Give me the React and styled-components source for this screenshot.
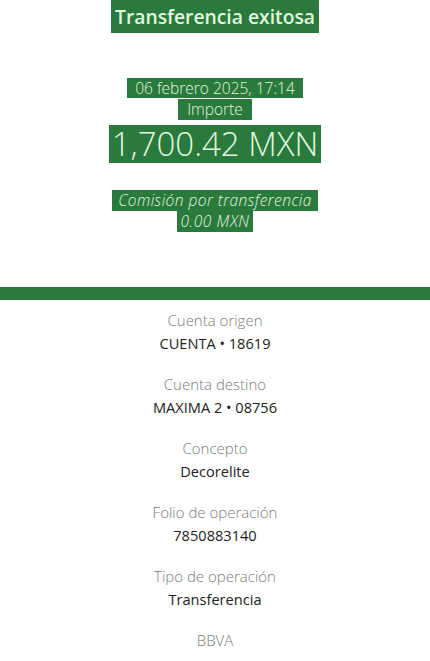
import React from "react";
import styled, { createGlobalStyle } from "styled-components";

const green = "#2a7a3d";

const GlobalStyle = createGlobalStyle`
  body {
    margin: 0;
    background: #ffffff;
    font-family: "Open Sans", "Noto Sans", sans-serif;
  }
`;

const Page = styled.div`
  width: 430px;
  display: flex;
  flex-direction: column;
  align-items: center;
`;

const Header = styled.header`
  display: flex;
  flex-direction: column;
  align-items: center;
  width: 100%;
`;

const Mark = styled.span`
  display: inline-block;
  background: ${green};
  color: #e3f6df;
  padding: 0 ${p => p.$pad || 6}px;
  font-size: ${p => p.$size}px;
  line-height: ${p => p.$line}px;
  font-weight: ${p => p.$weight || 300};
  font-style: ${p => (p.$italic ? "italic" : "normal")};
  letter-spacing: ${p => p.$track || 0}px;
  margin-top: ${p => p.$top || 0}px;
  white-space: nowrap;
`;

const Bar = styled.div`
  width: 100%;
  height: 13px;
  background: ${green};
  margin-top: 55px;
`;

const Details = styled.dl`
  margin: 10px 0 0;
  display: flex;
  flex-direction: column;
  align-items: center;
  width: 100%;
`;

const Item = styled.div`
  display: flex;
  flex-direction: column;
  align-items: center;
  height: 64px;
`;

const Label = styled.dt`
  font-size: 15px;
  line-height: 20px;
  color: #7a7a7a;
  font-weight: 300;
`;

const Value = styled.dd`
  margin: 3px 0 0;
  font-size: 14.6px;
  line-height: 20px;
  color: #222222;
  font-weight: 400;
`;

const Bank = styled.div`
  font-size: 15px;
  line-height: 20px;
  color: #7a7a7a;
  font-weight: 300;
`;

const rows = [
  ["Cuenta origen", "CUENTA • 18619"],
  ["Cuenta destino", "MAXIMA 2 • 08756"],
  ["Concepto", "Decorelite"],
  ["Folio de operación", "7850883140"],
  ["Tipo de operación", "Transferencia"],
];

export default function App() {
  return (
    <Page>
      <GlobalStyle />
      <Header>
        <Mark $size={19.3} $line={33} $weight={600} $pad={4}>
          Transferencia exitosa
        </Mark>
        <Mark $size={15.5} $line={20} $top={45} $pad={8}>
          06 febrero 2025, 17:14
        </Mark>
        <Mark $size={15.5} $line={21} $top={1} $pad={9}>
          Importe
        </Mark>
        <Mark $size={33} $line={38} $top={5} $pad={3}>
          1,700.42 MXN
        </Mark>
        <Mark $size={15.5} $line={21} $top={27} $pad={6} $track={0.45} $italic>
          Comisión por transferencia
        </Mark>
        <Mark $size={15.5} $line={21} $pad={3} $track={0.6} $italic>
          0.00 MXN
        </Mark>
      </Header>
      <Bar />
      <Details>
        {rows.map(([label, value]) => (
          <Item key={label}>
            <Label>{label}</Label>
            <Value>{value}</Value>
          </Item>
        ))}
        <Bank>BBVA</Bank>
      </Details>
    </Page>
  );
}
